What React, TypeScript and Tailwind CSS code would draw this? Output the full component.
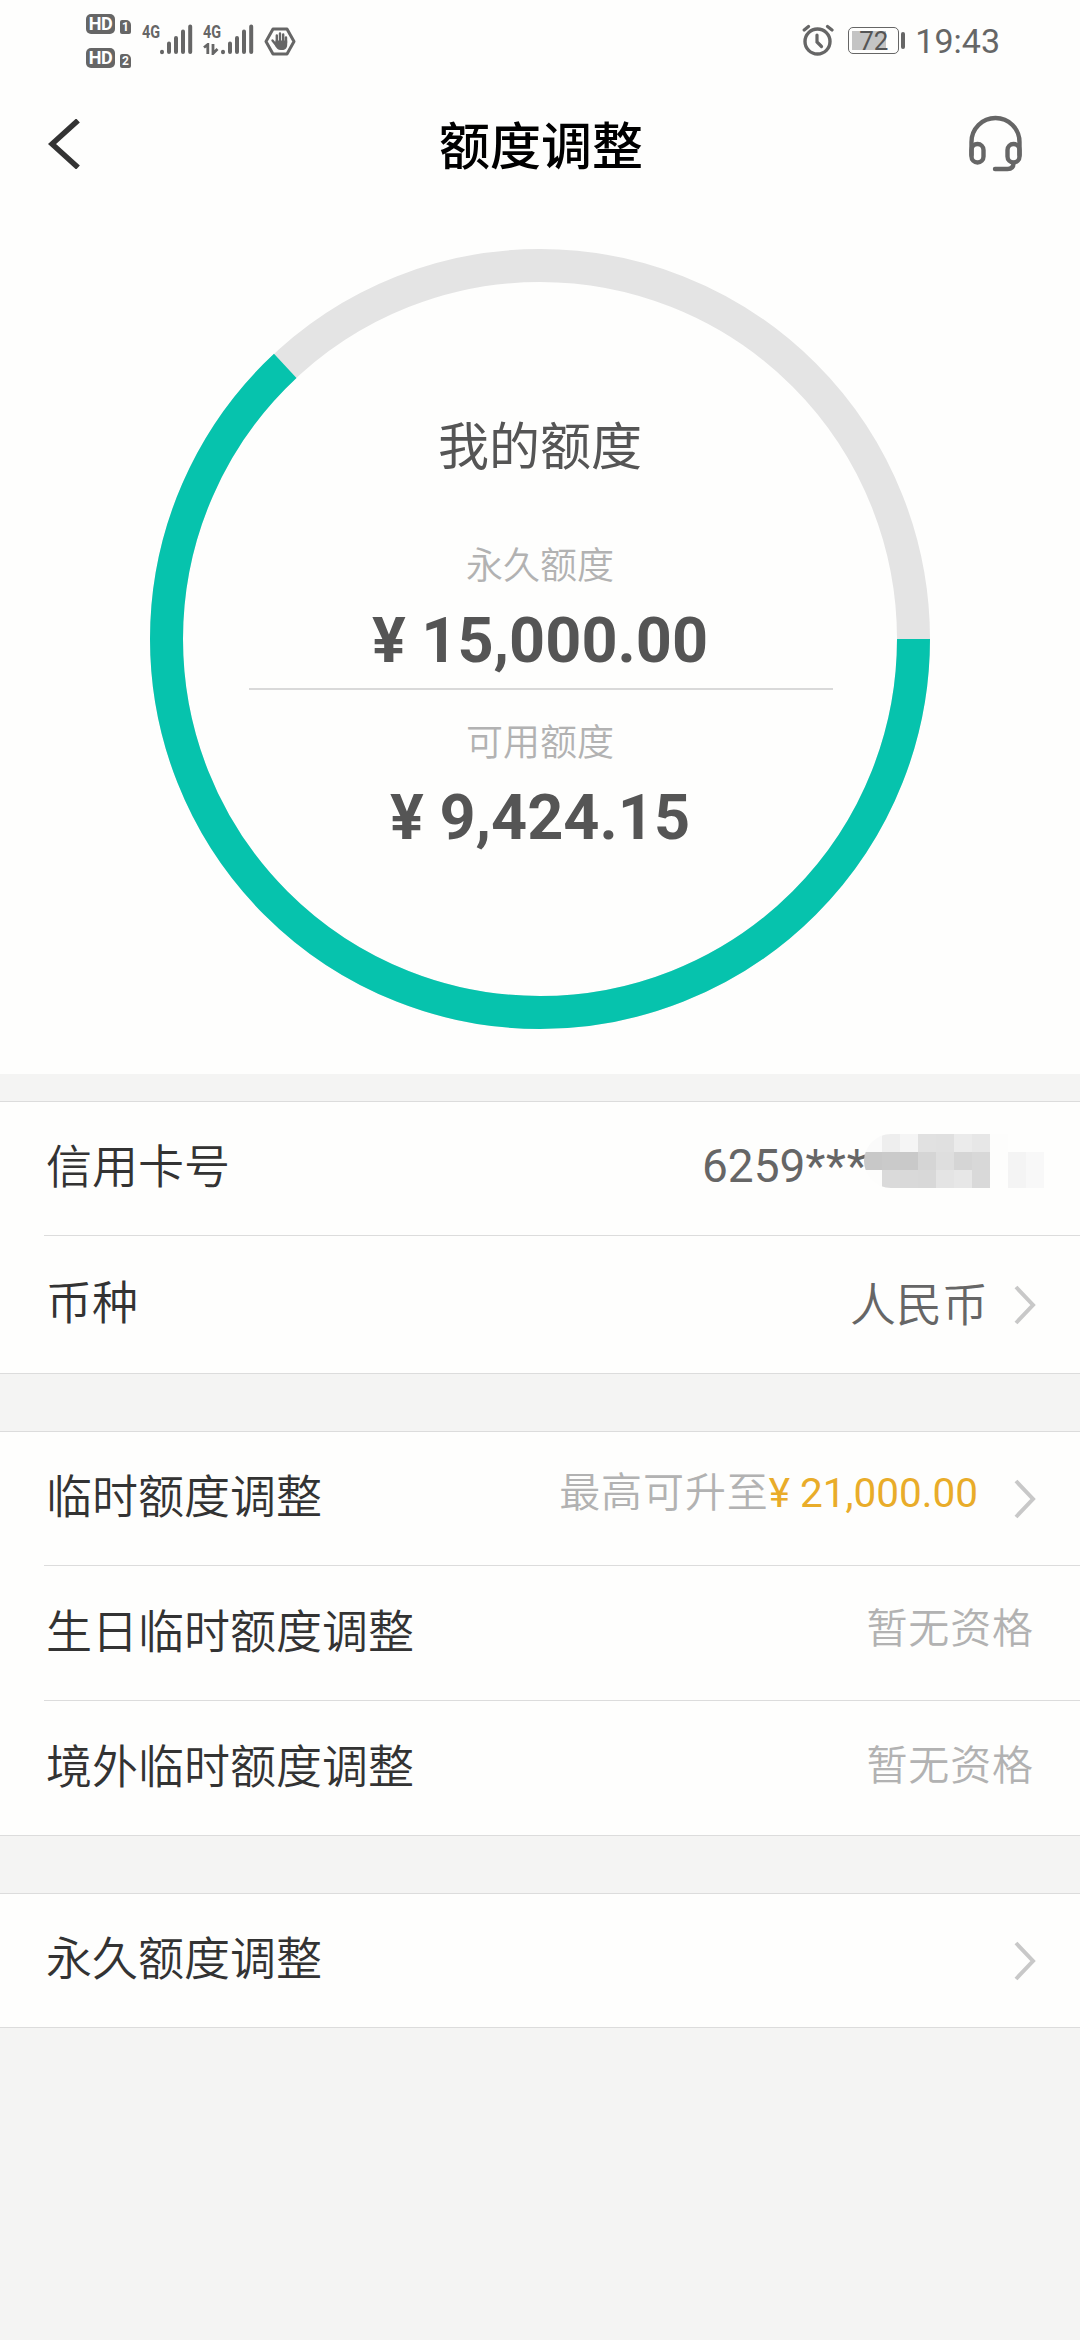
import type { ReactNode } from 'react'

const CJK = "font-['Roboto','Noto_Sans_CJK_SC',sans-serif]"

const LIMIT = 15000
const AVAILABLE = 9424.15

const yuan = (n: number) => '¥ ' + n.toLocaleString('en-US', { minimumFractionDigits: 2 })

// Mosaic over the hidden card digits, one row of 18px cells per line.
const MOSAIC: string[][] = [
  ['#fafafa', '#eeeeee', '#f5f5f5', '#e1e1e1', '#e0e0e0', '#ebebeb', '#e7e7e7', '#fdfdfc', '#fefefd', '#fefefd', '#fefefd'],
  ['#c8c8c8', '#cacaca', '#c9c9c9', '#d5d5d5', '#dedede', '#d5d5d5', '#d8d8d8', '#fdfdfc', '#f4f4f4', '#f8f8f8', '#fefefd'],
  ['#fdfdfc', '#dadada', '#d9d9d9', '#d8d8d8', '#e4e4e4', '#e7e7e7', '#d9d9d9', '#fefefd', '#f4f4f4', '#f8f8f8', '#fefefd'],
]

function SignalBars() {
  return (
    <svg width="34" height="32" viewBox="0 0 34 32" fill="none" stroke="#666" strokeWidth="4" strokeLinecap="round">
      <path d="M3 28.2v-.4M10 28v-8.500M17 28V14M24 28V7.500M31.200 28V2.500" />
    </svg>
  )
}

function SimBadge({ slot }: { slot: number }) {
  return (
    <div className="flex h-[21px] items-end gap-[5px]">
      <span className="grid h-[20px] w-[29px] place-items-center rounded-[5px] bg-[#666] text-[18px] font-bold leading-none tracking-[-0.5px] text-white">
        HD
      </span>
      <span className="grid h-[14px] w-[11px] place-items-center rounded-[2px] rounded-tr-[5px] bg-[#666] text-[12px] font-bold leading-none text-white">
        {slot}
      </span>
    </div>
  )
}

function StatusBar() {
  return (
    <div className="flex h-20 items-start pl-[86px] pr-[80px] text-[#666]">
      <div className="mt-[13px] flex flex-col gap-[13px]">
        <SimBadge slot={1} />
        <SimBadge slot={2} />
      </div>
      <div className="ml-[11px] mt-[24px] flex">
        <span className="w-[17px] origin-left scale-x-[0.8] text-[18px] font-bold leading-[15px]">4G</span>
        <SignalBars />
      </div>
      <div className="ml-[10px] mt-[24px] flex">
        <div className="w-[17px]">
          <div className="origin-left scale-x-[0.8] text-[18px] font-bold leading-[15px]">4G</div>
          <svg width="16" height="12" viewBox="0 0 16 12" className="mt-[4px]" fill="none" stroke="#666" strokeWidth="2.800">
            <path d="M1 4.500 4.800 1.500V11M10 1v9.500L14.500 6" />
          </svg>
        </div>
        <SignalBars />
      </div>
      <svg width="32" height="29" viewBox="0 0 32 29" className="ml-[10px] mt-[27px]">
        <path d="M9 2h14l7 12.500L23 27H9L2 14.500z" fill="none" stroke="#666" strokeWidth="3" strokeLinejoin="round" />
        <path
          d="M12.800 15V8.500M16 14V6.500M19.200 15V7.500M22 16V10.500M8.500 13.500l4 5"
          stroke="#666"
          strokeWidth="2.400"
          strokeLinecap="round"
          fill="none"
        />
        <path d="M11.600 13.500H23.200V18c0 3-2.200 5-5 5h-1.400c-3 0-4.400-1.800-6-5z" fill="#666" />
      </svg>

      <svg width="32" height="32" viewBox="0 0 32 32" className="ml-auto mt-[24px]" fill="none" stroke="#666" strokeLinecap="round">
        <circle cx="15.500" cy="17.500" r="12.500" strokeWidth="3.400" />
        <path d="M15 11v7l4.500 4.500" strokeWidth="3.200" />
        <path d="M2.200 6 6.500 2.500M25.500 2.500 30 6" strokeWidth="3.200" />
      </svg>
      <div className="ml-[14px] mt-[27px] flex items-center">
        <div className="relative h-[27px] w-[51px] rounded-[5px] border-[1.500px] border-[#666] p-[3px]">
          <div className="h-full w-[34px] bg-[#c4c4c4]" />
          <span className="absolute inset-0 grid place-items-center text-[26px] leading-none text-[#555]">72</span>
        </div>
        <div className="ml-[2px] h-[17px] w-[4px] rounded-full bg-[#666]" />
      </div>
      <span className="ml-[10px] mt-[24px] text-[34px] leading-[34px]">19:43</span>
    </div>
  )
}

function NavBar() {
  return (
    <header className="grid h-[130px] grid-cols-[1fr_auto_1fr] items-center px-[48px]">
      <svg width="33" height="50" viewBox="0 0 33 50" className="mb-[3px]" fill="none" stroke="#333" strokeWidth="5.500">
        <path d="M30 1.500 4 25 30 48.500" />
      </svg>
      <h1 className="ml-[2px] mt-[4px] text-[51px] font-medium leading-none text-black">额度调整</h1>
      <svg width="56" height="58" viewBox="0 0 56 58" className="mb-[2px] mr-[9px] justify-self-end" fill="none" stroke="#666" strokeWidth="4.400" strokeLinecap="round">
        <path d="M4.500 40V27a24 24 0 0 1 48 0v13" />
        <rect x="4.500" y="29" width="12" height="18.500" rx="6" />
        <rect x="40.500" y="29" width="12" height="18.500" rx="6" />
        <path d="M46.500 48c0 4-2 6-6 6H28" />
      </svg>
    </header>
  )
}

function LimitRing() {
  const r = 373.5
  const length = 2 * Math.PI * r
  return (
    <section className="grid h-[864px] justify-center pt-[39px]">
      <svg width="780" height="780" viewBox="0 0 780 780" className="[grid-area:1/1]" fill="none" strokeWidth="33">
        <circle cx="390" cy="390" r={r} stroke="#e4e4e4" />
        <circle cx="390" cy="390" r={r} stroke="#06c3ad" strokeDasharray={`${(length * (AVAILABLE + 30)) / LIMIT} ${length}`} />
      </svg>
      <div className="flex flex-col items-center pt-[173px] leading-none text-[#555] [grid-area:1/1]">
        <h2 className="text-[51px]">我的额度</h2>
        <p className="mt-[75px] text-[37px] font-[350] text-[#b2b2b2]">永久额度</p>
        <p className="mt-[24px] text-[63px] font-bold">{yuan(LIMIT)}</p>
        <div className="ml-[2px] mt-[16px] h-[2px] w-[584px] bg-[#d9d9d9]" />
        <p className="mt-[35px] text-[37px] font-[350] text-[#b2b2b2]">可用额度</p>
        <p className="mt-[24px] text-[63px] font-bold">{yuan(AVAILABLE)}</p>
      </div>
    </section>
  )
}

function Chevron() {
  return (
    <svg width="22" height="40" viewBox="0 0 22 40" className="ml-[27px] mt-[1px]" fill="none" stroke="#c8c8c8" strokeWidth="4">
      <path d="M2 2 19 20 2 38" />
    </svg>
  )
}

function Group({ children }: { children: ReactNode }) {
  return <section className="border-y border-[#dcdcdc] bg-[#fefefd]">{children}</section>
}

interface RowProps {
  label: string
  height?: string
  last?: boolean
  children?: ReactNode
}

function Row({ label, height = 'h-[134px]', last = false, children }: RowProps) {
  return (
    <div className={`pl-[44px] ${height}`}>
      <div className={`flex h-full items-center justify-between pr-[44px] ${last ? '' : 'border-b border-[#dcdcdc]'}`}>
        <span className="mb-[3px] pl-[2px] text-[46px] font-[350] leading-none text-[#333]">{label}</span>
        <div className="flex items-center leading-none">{children}</div>
      </div>
    </div>
  )
}

function MaskedCard() {
  return (
    <div className="relative mb-[5px] w-[334px] text-[46px] text-[#666]">
      6259<span className="tracking-[0.800px]">****</span>
      <div className="absolute left-[162px] top-[-9px] overflow-hidden rounded-l-[27px]">
        {MOSAIC.map((line, y) => (
          <div key={y} className="flex">
            {line.map((color, x) => (
              <span key={x} className="h-[18px] w-[18px]" style={{ background: color }} />
            ))}
          </div>
        ))}
      </div>
    </div>
  )
}

export default function App() {
  return (
    <main className={`min-h-[2340px] w-[1080px] bg-[#f4f4f3] ${CJK}`}>
      <div className="bg-[#fefefd]">
        <StatusBar />
        <NavBar />
        <LimitRing />
      </div>

      <div className="mt-[27px] flex flex-col gap-[57px]">
        <Group>
          <Row label="信用卡号">
            <MaskedCard />
          </Row>
          <Row label="币种" height="h-[137px]" last>
            <span className="mr-[-1px] text-[46px] font-[350] text-[#666]">人民币</span>
            <Chevron />
          </Row>
        </Group>

        <Group>
          <Row label="临时额度调整">
            <span className="mb-[10px] text-[41px] font-[350] tracking-[0.900px] text-[#b2b2b2]">最高可升至</span>
            <span className="mb-[10px] mr-[9px] text-[40.500px] text-[#e9ac29]">{yuan(21000)}</span>
            <Chevron />
          </Row>
          <Row label="生日临时额度调整" height="h-[135px]">
            <span className="mb-[8px] mr-[2px] text-[41px] font-[350] tracking-[0.900px] text-[#b2b2b2]">暂无资格</span>
          </Row>
          <Row label="境外临时额度调整" last>
            <span className="mb-[4px] mr-[2px] text-[41px] font-[350] tracking-[0.900px] text-[#b2b2b2]">暂无资格</span>
          </Row>
        </Group>

        <Group>
          <Row label="永久额度调整" height="h-[133px]" last>
            <Chevron />
          </Row>
        </Group>
      </div>
    </main>
  )
}
